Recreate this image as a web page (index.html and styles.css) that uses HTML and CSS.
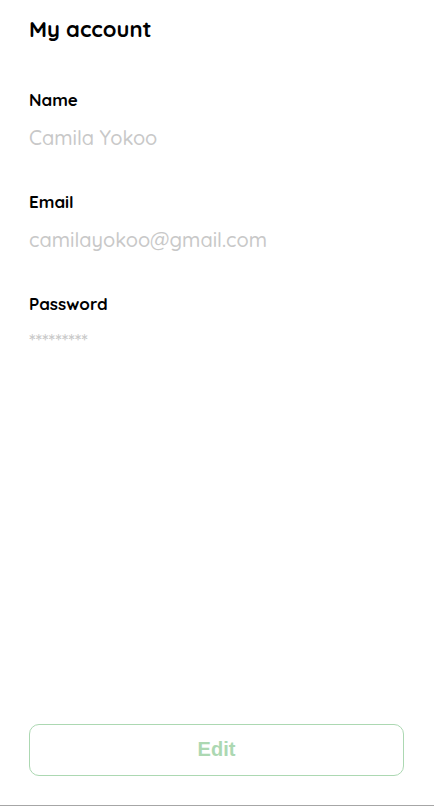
FILE: index.html
```html
<!DOCTYPE html>
<html lang="en">
<head>
  <meta charset="utf-8">
  <meta name="viewport" content="width=device-width, initial-scale=1">
  <title>My account</title>
  <link rel="stylesheet" href="styles.css">
</head>
<body>
  <main class="account">
    <h1 class="account-title">My account</h1>
    <dl class="details">
      <div class="detail">
        <dt class="detail-label">Name</dt>
        <dd class="detail-value">Camila Yokoo</dd>
      </div>
      <div class="detail">
        <dt class="detail-label">Email</dt>
        <dd class="detail-value">camilayokoo@gmail.com</dd>
      </div>
      <div class="detail">
        <dt class="detail-label">Password</dt>
        <dd class="detail-value">*********</dd>
      </div>
    </dl>
    <button class="edit-button" type="button">Edit</button>
  </main>
</body>
</html>
```
FILE: styles.css
```css
* {
  box-sizing: border-box;
}

body {
  margin: 0;
  background: #fff;
  color: #000;
  font-family: Quicksand, Lato, sans-serif;
}

.account {
  display: flex;
  flex-direction: column;
  min-height: 100vh;
  padding: 14px 30px 29px 29px;
  border-bottom: 1px solid #a6a6a6;
}

.account-title {
  margin: 0;
  font-size: 22px;
  line-height: 30px;
  font-weight: 700;
}

.details {
  display: flex;
  flex-direction: column;
  gap: 40px;
  margin: 44px 0 40px;
}

.detail {
  display: flex;
  flex-direction: column;
  gap: 14px;
}

.detail-label {
  font-size: 17px;
  line-height: 24px;
  font-weight: 700;
}

.detail-value {
  margin: 0;
  color: #c8c8c8;
  font-size: 20px;
  line-height: 24px;
  font-weight: 500;
}

.edit-button {
  height: 52px;
  margin-top: auto;
  padding: 0 6px 2px;
  border: 1px solid #acd8b2;
  border-radius: 10px;
  background: #fff;
  color: #acd8b2;
  font-family: "Liberation Sans", Arial, sans-serif;
  font-size: 20px;
  font-weight: 700;
  cursor: pointer;
}
```
